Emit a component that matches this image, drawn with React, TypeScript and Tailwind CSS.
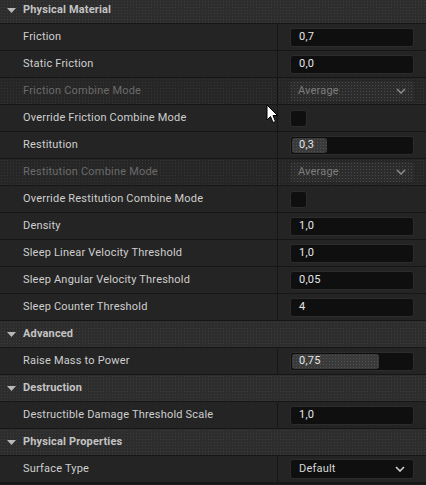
import React from "react";

const dots = "bg-[radial-gradient(rgba(255,255,255,0.07)_0.6px,transparent_0.8px)] bg-[length:3px_3px]";

function Header({ title, first }: { title: string; first?: boolean }) {
  return (
    <div className={`flex items-center h-[27px] border-b border-[#161616] bg-[#2d2d2d] ${first ? "-mt-[3px]" : ""}`}>
      <div className={`flex items-center w-full h-full ${dots}`}>
        <svg width="9" height="5" viewBox="0 0 9 5" className="ml-[7px] mr-[7px]">
          <polygon points="0,0 9,0 4.5,5" fill="#b8b8b8" />
        </svg>
        <span className="text-[11px] font-bold tracking-[0.15px] text-[#c4c4c4]">{title}</span>
      </div>
    </div>
  );
}

function Row({ label, disabled, children }: { label: string; disabled?: boolean; children: React.ReactNode }) {
  return (
    <div className={`flex h-[27px] border-b border-[#161616] ${disabled ? "bg-[#262626]" : "bg-[#242424]"}`}>
      <div className={`w-[278px] flex items-center pl-[23px] border-r border-[#161616] ${disabled ? dots : ""}`}>
        <span className={`text-[11px] tracking-[0.2px] ${disabled ? "text-[#6b6b6b]" : "text-[#cfcfcf]"}`}>{label}</span>
      </div>
      <div className={`flex-1 flex items-center px-3 ${disabled ? dots : ""}`}>{children}</div>
    </div>
  );
}

function Input({ value }: { value: string }) {
  return (
    <div className="flex-1 h-[19px] rounded-[3px] bg-[#0f0f0f] border border-[#2c2c2c] flex items-center pl-[8px]">
      <span className="text-[11px] tracking-[0.2px] text-[#e6e6e6]">{value}</span>
    </div>
  );
}

function Slider({ value, pct }: { value: string; pct: number }) {
  return (
    <div className="relative flex-1 h-[19px] rounded-[3px] bg-[#0f0f0f] border border-[#2c2c2c] flex items-center pl-[8px]">
      <div
        className="absolute left-[1px] top-[1px] bottom-[1px] rounded-[3px] bg-[#3a3a3a] bg-[radial-gradient(rgba(255,255,255,0.12)_0.6px,transparent_0.8px)] bg-[length:3px_3px]"
        style={{ width: `${pct}%` }}
      />
      <span className="relative text-[11px] tracking-[0.2px] text-[#e6e6e6]">{value}</span>
    </div>
  );
}

function Chevron({ color }: { color: string }) {
  return (
    <svg width="10" height="6" viewBox="0 0 10 6" className="mr-[8px]">
      <polyline points="1,1 5,5 9,1" fill="none" stroke={color} strokeWidth="1.6" />
    </svg>
  );
}

function DisabledSelect({ value }: { value: string }) {
  return (
    <div className="flex-1 h-[20px] rounded-[3px] bg-[#2c2c2c] bg-[radial-gradient(rgba(255,255,255,0.14)_0.6px,transparent_0.8px)] bg-[length:3px_3px] flex items-center justify-between pl-[8px]">
      <span className="text-[11px] tracking-[0.2px] text-[#7c7c7c]">{value}</span>
      <Chevron color="#8a8a8a" />
    </div>
  );
}

function Select({ value }: { value: string }) {
  return (
    <div className="flex-1 h-[20px] rounded-[3px] bg-[#0f0f0f] border border-[#2c2c2c] flex items-center justify-between pl-[8px]">
      <span className="text-[11px] tracking-[0.2px] text-[#d6d6d6]">{value}</span>
      <Chevron color="#cfcfcf" />
    </div>
  );
}

function Check() {
  return <div className="w-[17px] h-[17px] rounded-[3px] bg-[#0f0f0f] border border-[#2c2c2c]" />;
}

export default function App() {
  return (
    <div
      className="relative w-[426px] h-[485px] overflow-hidden bg-[#1a1a1a]"
      style={{ fontFamily: "Roboto, 'Liberation Sans', sans-serif" }}
    >
      <Header title="Physical Material" first />
      <Row label="Friction"><Input value="0,7" /></Row>
      <Row label="Static Friction"><Input value="0,0" /></Row>
      <Row label="Friction Combine Mode" disabled><DisabledSelect value="Average" /></Row>
      <Row label="Override Friction Combine Mode"><Check /></Row>
      <Row label="Restitution"><Slider value="0,3" pct={29} /></Row>
      <Row label="Restitution Combine Mode" disabled><DisabledSelect value="Average" /></Row>
      <Row label="Override Restitution Combine Mode"><Check /></Row>
      <Row label="Density"><Input value="1,0" /></Row>
      <Row label="Sleep Linear Velocity Threshold"><Input value="1,0" /></Row>
      <Row label="Sleep Angular Velocity Threshold"><Input value="0,05" /></Row>
      <Row label="Sleep Counter Threshold"><Input value="4" /></Row>
      <Header title="Advanced" />
      <Row label="Raise Mass to Power"><Slider value="0,75" pct={71} /></Row>
      <Header title="Destruction" />
      <Row label="Destructible Damage Threshold Scale"><Input value="1,0" /></Row>
      <Header title="Physical Properties" />
      <Row label="Surface Type"><Select value="Default" /></Row>

      <svg width="13" height="20" viewBox="0 0 13 20" className="absolute left-[266px] top-[104px]">
        <path d="M1 1 L1 16 L4.5 12.5 L7 18.5 L9.5 17.5 L7 11.5 L11.5 11.5 Z" fill="#ffffff" stroke="#000000" strokeWidth="1" />
      </svg>
    </div>
  );
}
